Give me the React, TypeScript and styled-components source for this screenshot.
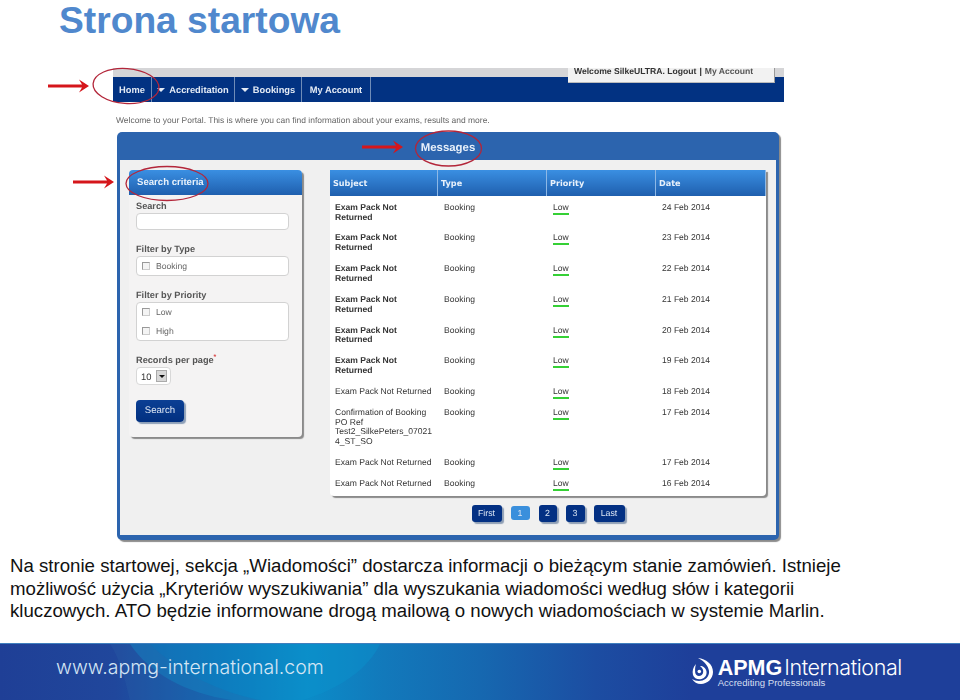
import React from 'react'
import styled, { createGlobalStyle } from 'styled-components'

const GlobalStyle = createGlobalStyle`
  html, body {
    margin: 0;
    padding: 0;
    background: #fff;
  }
`

const Page = styled.div`
  position: relative;
  width: 960px;
  height: 700px;
  display: flex;
  flex-direction: column;
  overflow: hidden;
  background: #fff;
  font-family: 'Liberation Sans', Arial, sans-serif;
`

const Title = styled.h1`
  height: 68px;
  margin: 0;
  padding-left: 59px;
  font-size: 37.2px;
  line-height: 41px;
  font-weight: 700;
  color: #5088cd;
`

const Portal = styled.div`
  position: relative;
  width: 671px;
  margin-left: 113px;
  filter: blur(0.35px);
  text-rendering: geometricPrecision;
`

const TopStrip = styled.div`
  height: 9px;
  background: #d5d5d7;
`

const WelcomeBox = styled.div`
  position: absolute;
  top: 0;
  right: 9px;
  width: 207px;
  height: 15px;
  box-sizing: border-box;
  padding-left: 6px;
  background: #f2f2f2;
  border-right: 1px solid #999;
  border-bottom: 1px solid #bbb;
  font-size: 8.6px;
  line-height: 7px;
  font-weight: 700;
  color: #333;
  white-space: nowrap;
`

const WelcomeSep = styled.span`
  margin: 0 3px;
  color: #222;
`

const WelcomeLink = styled.span`
  color: #555;
`

const Nav = styled.div`
  height: 25px;
  display: flex;
  background: #023282;
`

const NavItem = styled.div<{ $w: number }>`
  width: ${(p) => p.$w}px;
  box-sizing: border-box;
  display: flex;
  align-items: center;
  justify-content: center;
  gap: 4px;
  border-right: 1px solid #6f8cb8;
  font-size: 9.3px;
  font-weight: 700;
  color: #e4ebf5;
`

const NavCaret = styled.span`
  width: 0;
  height: 0;
  border-left: 4px solid transparent;
  border-right: 4px solid transparent;
  border-top: 4px solid #e4ebf5;
`

const Intro = styled.div`
  height: 30px;
  padding-left: 3px;
  font-size: 8.46px;
  line-height: 36px;
  color: #666;
  white-space: nowrap;
`

const Panel = styled.div`
  width: 662px;
  margin-left: 4px;
  height: 408px;
  box-sizing: border-box;
  display: flex;
  flex-direction: column;
  border-radius: 5px;
  background: #2c64ae;
  padding: 0 3px 5px 3px;
  box-shadow: 2px 2px 1px #8b8b8b;
`

const PanelTitle = styled.div`
  height: 28px;
  flex: none;
  text-align: center;
  font-size: 11.4px;
  line-height: 33px;
  font-weight: 700;
  color: #e8f0fa;
`

const PanelBody = styled.div`
  flex: 1;
  padding: 10px 0 0 9px;
  background: #f0f0f0;
`

const Columns = styled.div`
  display: flex;
  align-items: flex-start;
  gap: 28px;
`

const Card = styled.div`
  width: 173px;
  height: 267px;
  flex: none;
  border-radius: 4px;
  background: #f4f3f3;
  box-shadow: 2px 2px 1px #8a8a8a;
`

const BlueHead = styled.div`
  background: linear-gradient(#3a8fe2, #1f5fae);
  color: #e8f1fb;
  font-weight: 700;
`

const CardHead = styled(BlueHead)`
  height: 25px;
  padding-left: 8px;
  border-radius: 4px 4px 0 0;
  font-size: 9.6px;
  line-height: 26px;
`

const CardBody = styled.div`
  padding: 5px 0 0 7px;
`

const FieldLabel = styled.div<{ $mt?: number }>`
  margin-top: ${(p) => p.$mt ?? 0}px;
  font-size: 9.2px;
  line-height: 12px;
  font-weight: 700;
  color: #555;
`

const Required = styled.sup`
  font-size: 7px;
  line-height: 0;
  color: #d84040;
`

const TextBox = styled.div`
  width: 153px;
  height: 17px;
  margin-top: 1px;
  box-sizing: border-box;
  background: #fff;
  border: 1px solid #d2d2d2;
  border-radius: 4px;
`

const CheckGroup = styled.div<{ $h: number }>`
  width: 153px;
  height: ${(p) => p.$h}px;
  margin-top: 1px;
  box-sizing: border-box;
  padding: 0 5px;
  display: flex;
  flex-direction: column;
  justify-content: space-around;
  background: #fff;
  border: 1px solid #d2d2d2;
  border-radius: 4px;
`

const CheckRow = styled.div`
  display: flex;
  align-items: center;
  gap: 6px;
  font-size: 8.6px;
  color: #666;
`

const CheckSquare = styled.span`
  width: 8px;
  height: 8px;
  box-sizing: border-box;
  background: #f4f4f4;
  border: 1px solid #999;
  border-right-color: #ccc;
  border-bottom-color: #ccc;
`

const SelectBox = styled.div`
  width: 35px;
  height: 18px;
  margin-top: 1px;
  box-sizing: border-box;
  display: flex;
  align-items: center;
  justify-content: space-between;
  padding: 0 3px 0 4px;
  background: #fff;
  border: 1px solid #d8d8d8;
  border-radius: 4px;
  font-size: 9.4px;
  color: #333;
`

const SelectArrow = styled.span`
  width: 11px;
  height: 12px;
  box-sizing: border-box;
  display: flex;
  align-items: center;
  justify-content: center;
  background: #d8d8d8;
  border: 1px solid #aaa;

  &::after {
    content: '';
    border-left: 3px solid transparent;
    border-right: 3px solid transparent;
    border-top: 3px solid #111;
  }
`

const SearchButton = styled.div`
  width: 48px;
  height: 22px;
  margin-top: 15px;
  border-radius: 4px;
  background: linear-gradient(#0b3f94, #023080);
  box-shadow: 2px 2px 1px #8ea0b8;
  text-align: center;
  font-size: 9.6px;
  line-height: 21px;
  color: #dfe8f5;
`

const TableCard = styled.div`
  width: 436px;
  flex: none;
  border-radius: 0 0 4px 4px;
  background: #fff;
  padding-bottom: 3px;
  box-shadow: 2px 2px 1px #8a8a8a;
`

const TableGrid = styled.div`
  display: grid;
  grid-template-columns: 108px 109px 109px 110px;
`

const HeadCell = styled(BlueHead)`
  height: 26px;
  box-sizing: border-box;
  padding-left: 3px;
  border-right: 1px solid #8db8e6;
  font-family: 'DejaVu Sans', sans-serif;
  font-size: 8.1px;
  line-height: 27px;

  &:last-child {
    border-right: none;
  }
`

const Cell = styled.div<{ $strong?: boolean }>`
  padding: 6.8px 0 4.4px 6px;
  font-size: 8.55px;
  line-height: 9.75px;
  font-weight: ${(p) => (p.$strong ? 700 : 400)};
  color: #333;
  white-space: nowrap;
`

const SubjectCell = styled(Cell)`
  padding-left: 5px;
`

const PriorityLow = styled.span`
  padding-bottom: 1px;
  border-bottom: 2px solid #35d035;
`

const Pagination = styled.div`
  height: 18px;
  margin: 9px 0 0 201px;
  width: 436px;
  display: flex;
  justify-content: center;
  gap: 9px;
`

const PageButton = styled.div<{ $w: number; $active?: boolean }>`
  width: ${(p) => p.$w}px;
  height: ${(p) => (p.$active ? 14 : 17)}px;
  margin-top: ${(p) => (p.$active ? 1 : 0)}px;
  border-radius: 3px;
  background: ${(p) => (p.$active ? '#3a8fdc' : '#033083')};
  box-shadow: ${(p) => (p.$active ? 'none' : '2px 2px 1px #8f9fb5')};
  text-align: center;
  font-size: 8.8px;
  line-height: ${(p) => (p.$active ? 14 : 16)}px;
  color: #dce6f4;
`

const Annotations = styled.svg`
  position: absolute;
  top: 0;
  left: 0;
  pointer-events: none;
`

const BodyText = styled.p`
  margin: 15px 0 0;
  padding-left: 10px;
  font-size: 18.65px;
  line-height: 22.7px;
  color: #111;
  white-space: nowrap;
`

const Footer = styled.div`
  position: relative;
  height: 57px;
  margin-top: auto;
  display: flex;
  align-items: flex-start;
  justify-content: space-between;
  overflow: hidden;
  border-top: 1px solid #3f7fbe;
  box-sizing: border-box;
  background: linear-gradient(
    90deg,
    #1f3f96 0%,
    #20479c 12%,
    #0f6db5 24%,
    #0b8cc8 32%,
    #1279bb 40%,
    #1668b0 50%,
    #1c4da2 62%,
    #1e3f9a 72%,
    #1e3f9a 100%
  );
`

const FooterArt = styled.svg`
  position: absolute;
  top: 0;
  left: 0;
`

const FooterUrl = styled.div`
  position: relative;
  margin: 8px 0 0 56px;
  font-family: Inter, sans-serif;
  font-size: 19.5px;
  font-weight: 300;
  line-height: 30px;
  color: #d3e5f4;
`

const Logo = styled.div`
  position: relative;
  display: flex;
  align-items: flex-start;
  gap: 5px;
  margin: 14px 58px 0 0;
  color: #fff;
`

const LogoText = styled.div`
  display: flex;
  flex-direction: column;
`

const LogoMain = styled.div`
  display: flex;
  align-items: baseline;
  gap: 2px;
  height: 18px;
  line-height: 18px;
`

const LogoMark = styled.span`
  font-size: 21.5px;
  font-weight: 700;
`

const LogoName = styled.span`
  font-family: Inter, sans-serif;
  font-size: 21.5px;
  font-weight: 300;
  letter-spacing: -0.4px;
`

const LogoTag = styled.div`
  margin-top: 2px;
  font-size: 9.6px;
  line-height: 10px;
  color: #d5dff0;
`

const navItems = [
  { label: 'Home', w: 39 },
  { label: 'Accreditation', w: 83, caret: true },
  { label: 'Bookings', w: 67, caret: true },
  { label: 'My Account', w: 69 },
]

const packLines = ['Exam Pack Not', 'Returned']
const rows = [
  { lines: packLines, strong: true, date: '24 Feb 2014' },
  { lines: packLines, strong: true, date: '23 Feb 2014' },
  { lines: packLines, strong: true, date: '22 Feb 2014' },
  { lines: packLines, strong: true, date: '21 Feb 2014' },
  { lines: packLines, strong: true, date: '20 Feb 2014' },
  { lines: packLines, strong: true, date: '19 Feb 2014' },
  { lines: ['Exam Pack Not Returned'], date: '18 Feb 2014' },
  { lines: ['Confirmation of Booking', 'PO Ref', 'Test2_SilkePeters_07021', '4_ST_SO'], date: '17 Feb 2014' },
  { lines: ['Exam Pack Not Returned'], date: '17 Feb 2014' },
  { lines: ['Exam Pack Not Returned'], date: '16 Feb 2014' },
]

const pages = [
  { label: 'First', w: 30 },
  { label: '1', w: 19, active: true },
  { label: '2', w: 18 },
  { label: '3', w: 19 },
  { label: 'Last', w: 31 },
]

const Arrow = ({ x, y }: { x: number; y: number }) => (
  <g transform={`translate(${x} ${y})`} fill="#d5161b">
    <path d="M0 -1.5 L34 -1.5 L31 -6.5 L41 0 L31 6.5 L34 1.5 L0 1.5 Z" />
  </g>
)

const App = () => {
  return (
    <Page>
      <GlobalStyle />
      <Title>Strona startowa</Title>

      <Portal>
        <TopStrip />
        <WelcomeBox>
          Welcome SilkeULTRA. Logout<WelcomeSep>|</WelcomeSep>
          <WelcomeLink>My Account</WelcomeLink>
        </WelcomeBox>
        <Nav>
          {navItems.map((item) => (
            <NavItem key={item.label} $w={item.w}>
              {item.caret && <NavCaret />}
              {item.label}
            </NavItem>
          ))}
        </Nav>
        <Intro>Welcome to your Portal. This is where you can find information about your exams, results and more.</Intro>

        <Panel>
          <PanelTitle>Messages</PanelTitle>
          <PanelBody>
            <Columns>
              <Card>
                <CardHead>Search criteria</CardHead>
                <CardBody>
                  <FieldLabel>Search</FieldLabel>
                  <TextBox />
                  <FieldLabel $mt={13}>Filter by Type</FieldLabel>
                  <CheckGroup $h={20}>
                    <CheckRow>
                      <CheckSquare />
                      Booking
                    </CheckRow>
                  </CheckGroup>
                  <FieldLabel $mt={13}>Filter by Priority</FieldLabel>
                  <CheckGroup $h={39}>
                    <CheckRow>
                      <CheckSquare />
                      Low
                    </CheckRow>
                    <CheckRow>
                      <CheckSquare />
                      High
                    </CheckRow>
                  </CheckGroup>
                  <FieldLabel $mt={13}>
                    Records per page<Required>*</Required>
                  </FieldLabel>
                  <SelectBox>
                    10
                    <SelectArrow />
                  </SelectBox>
                  <SearchButton>Search</SearchButton>
                </CardBody>
              </Card>

              <TableCard>
                <TableGrid>
                  <HeadCell>Subject</HeadCell>
                  <HeadCell>Type</HeadCell>
                  <HeadCell>Priority</HeadCell>
                  <HeadCell>Date</HeadCell>
                  {rows.map((row, i) => (
                    <React.Fragment key={i}>
                      <SubjectCell $strong={row.strong}>
                        {row.lines.map((line) => (
                          <div key={line}>{line}</div>
                        ))}
                      </SubjectCell>
                      <Cell>Booking</Cell>
                      <Cell>
                        <PriorityLow>Low</PriorityLow>
                      </Cell>
                      <Cell>{row.date}</Cell>
                    </React.Fragment>
                  ))}
                </TableGrid>
              </TableCard>
            </Columns>

            <Pagination>
              {pages.map((p) => (
                <PageButton key={p.label} $w={p.w} $active={p.active}>
                  {p.label}
                </PageButton>
              ))}
            </Pagination>
          </PanelBody>
        </Panel>
      </Portal>

      <BodyText>
        Na stronie startowej, sekcja „Wiadomości” dostarcza informacji o bieżącym stanie zamówień. Istnieje
        <br />
        możliwość użycia „Kryteriów wyszukiwania” dla wyszukania wiadomości według słów i kategorii
        <br />
        kluczowych. ATO będzie informowane drogą mailową o nowych wiadomościach w systemie Marlin.
      </BodyText>

      <Footer>
        <FooterArt width="960" height="57" viewBox="0 0 960 57">
          <path d="M130 0 C150 30 190 52 240 57 L300 57 C340 45 368 25 380 0 Z" fill="#0a93cc" opacity="0.45" />
          <path d="M150 0 C175 25 215 48 265 57 L130 57 C125 35 120 15 110 0 Z" fill="#2a62a8" opacity="0.25" />
        </FooterArt>
        <FooterUrl>www.apmg-international.com</FooterUrl>
        <Logo>
          <svg width="21" height="27" viewBox="0 0 21 27" fill="#fff">
            <path d="M6 0 C14 1 21 6 21 14 C21 21 15 26 9 26 C5 26 2 24 0 21 C3 23 7 23.5 10.5 22.5 C15 21 17.5 17 17 13 C16.5 8 12 3 6 0 Z" />
            <path d="M4 6 C1 9 0 13 1 17 C2 20.5 6 22 9.5 21 C13 20 15 17 14.5 13.5 C14 10 11 8 8 8 C10.5 10 11.5 12 11.2 14 C11 16.5 9 18 7 18 C5 18 3.5 16.5 3.2 14.5 C3 11.5 3 9 4 6 Z" />
            <circle cx="7.3" cy="13.5" r="1.8" />
          </svg>
          <LogoText>
            <LogoMain>
              <LogoMark>APMG</LogoMark>
              <LogoName>International</LogoName>
            </LogoMain>
            <LogoTag>Accrediting Professionals</LogoTag>
          </LogoText>
        </Logo>
      </Footer>

      <Annotations width="960" height="560" viewBox="0 0 960 560">
        <g fill="none" stroke="#b3263a" strokeWidth="1.3">
          <ellipse cx="126" cy="86" rx="33" ry="17.5" transform="rotate(4 126 86)" />
          <ellipse cx="167" cy="183.5" rx="41" ry="17" />
          <ellipse cx="448.5" cy="148.5" rx="33" ry="17.5" />
        </g>
        <Arrow x={48} y={86} />
        <Arrow x={73} y={182} />
        <Arrow x={362} y={147} />
      </Annotations>
    </Page>
  )
}

export default App
